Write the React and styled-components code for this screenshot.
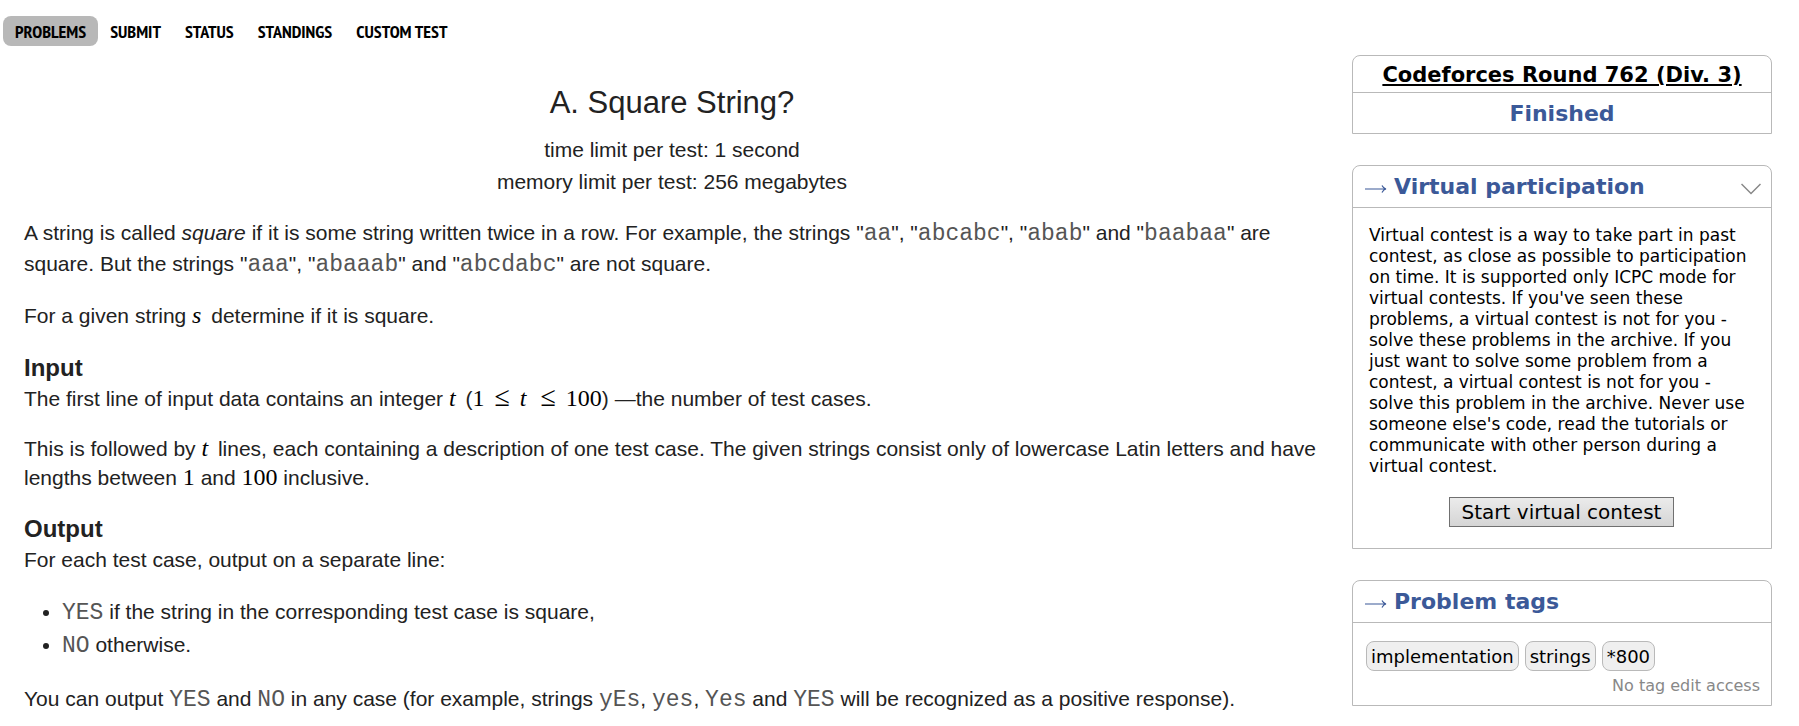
import React from 'react';
import styled, { createGlobalStyle, css } from 'styled-components';

const LINE = '#b9b9b9';
const BLUE = '#3b5998';

const GlobalStyle = createGlobalStyle`
  * { box-sizing: border-box; }
  body {
    margin: 0;
    background: #fff;
    color: #000;
    font-family: Verdana, "DejaVu Sans", sans-serif;
  }
`;

const Nav = styled.nav`
  display: flex;
  padding: 16px 0 0 3px;
`;

const Tab = styled.a`
  padding: 2px 12px 0;
  border-radius: 8px;
  background: ${(p) => (p.$active ? '#b8b8b8' : 'transparent')};
  color: #000;
  font: bold 18px/28px "PT Sans Narrow", "Liberation Sans Narrow", "Roboto Condensed", "Open Sans Condensed", "Liberation Sans", sans-serif;
  text-decoration: none;
  text-transform: uppercase;
`;

const Page = styled.div`
  display: grid;
  grid-template-columns: minmax(0, 1fr) 420px;
  gap: 32px;
  padding: 0 27px 12px 24px;
`;

const Statement = styled.main`
  padding-top: 36px;
  color: #222;
  font: 21px/31px "Liberation Sans", Arial, sans-serif;
`;

const Header = styled.header`
  margin-bottom: 19px;
  text-align: center;
  line-height: 32px;
`;

const Title = styled.h1`
  margin: 0 0 11px;
  font-size: 31px;
  font-weight: normal;
  line-height: 41px;
`;

const Paragraph = styled.p`
  margin: 0 0 21px;
  line-height: ${(p) => (p.$tight ? 29 : 31)}px;
`;

const SectionTitle = styled.h2`
  margin: 0;
  font-size: 24px;
  line-height: 32px;
`;

const List = styled.ul`
  margin: 0 0 22px;
  padding-left: 38px;
  line-height: 33px;
`;

const Tt = styled.code`
  color: #555;
  font: 23px/20px "Liberation Mono", monospace;
`;

const mathFont = css`
  color: #000;
  font: 24px/20px "Liberation Serif", serif;
`;

const Num = styled.span`
  ${mathFont}
`;

const Var = styled.var`
  ${mathFont}
  margin-right: 4px;
  font-style: italic;
`;

const Rel = styled.span`
  ${mathFont}
  margin: 0 10px;
  font-size: 28px;
`;

const Sidebar = styled.aside`
  display: flex;
  flex-direction: column;
  gap: 31px;
  padding-top: 9px;
`;

const Box = styled.section`
  border: 1px solid ${LINE};
  border-radius: 8px 8px 0 0;
`;

const ContestName = styled.h2`
  margin: 0;
  padding-top: 2px;
  border-bottom: 1px solid ${LINE};
  font-size: 21px;
  line-height: 34px;
  text-align: center;
`;

const ContestLink = styled.a`
  color: #000;
`;

const ContestState = styled.div`
  padding-top: 2px;
  color: ${BLUE};
  font-size: 22px;
  font-weight: bold;
  line-height: 38px;
  text-align: center;
`;

const Caption = styled.div`
  display: flex;
  align-items: center;
  gap: 7px;
  padding: 0 10px 0 12px;
  border-bottom: 1px solid ${LINE};
  color: ${BLUE};
`;

const CaptionText = styled.h2`
  flex: 1;
  margin: 0;
  font-size: 22px;
  line-height: 41px;
`;

const Toggle = styled.button`
  display: flex;
  padding: 4px 0 0;
  border: 0;
  background: none;
  color: #888;
`;

const ArrowSvg = styled.svg`
  flex: none;
  margin-top: 4px;
`;

const VirtualBody = styled.div`
  padding: 17px 17px 21px 16px;
  text-align: center;
`;

const VirtualText = styled.p`
  margin: 0 0 20px;
  font-size: 17px;
  line-height: 21px;
  text-align: left;
`;

const StartButton = styled.button`
  height: 30px;
  padding: 0 12px;
  border: 1px solid #707070;
  background: linear-gradient(#ebebeb, #d5d5d5);
  color: #000;
  font: 20px/26px Verdana, "DejaVu Sans", sans-serif;
  vertical-align: top;
`;

const TagsBody = styled.div`
  padding: 18px 11px 9px 13px;
`;

const Tags = styled.div`
  display: flex;
  gap: 6px;
`;

const Tag = styled.span`
  padding: 1px 4px 0;
  border: 1px solid ${LINE};
  border-radius: 8px;
  background: #efefef;
  font-size: 18px;
  line-height: 27px;
`;

const Note = styled.div`
  margin-top: 5px;
  color: #888;
  font-size: 16px;
  line-height: 20px;
  text-align: right;
`;

const Arrow = () => (
  <ArrowSvg width="22" height="10" viewBox="0 0 22 10" fill="none" stroke="currentColor" strokeWidth="1.2" aria-hidden="true">
    <path d="M0 5H21M17 1.5C18 3.500 19 4.500 21 5C19 5.500 18 6.500 17 8.500" />
  </ArrowSvg>
);

const Chevron = () => (
  <svg width="20" height="12" viewBox="0 0 20 12" fill="none" stroke="currentColor" strokeWidth="1.5" aria-hidden="true">
    <path d="M0.500 1L10 10.500L19.500 1" />
  </svg>
);

const TABS = ['Problems', 'Submit', 'Status', 'Standings', 'Custom test'];
const TAGS = ['implementation', 'strings', '*800'];

export default function App() {
  return (
    <>
      <GlobalStyle />
      <Nav>
        {TABS.map((name, i) => (
          <Tab key={name} href="#" $active={i === 0}>{name}</Tab>
        ))}
      </Nav>
      <Page>
        <Statement>
          <Header>
            <Title>A. Square String?</Title>
            <div>time limit per test: 1 second</div>
            <div>memory limit per test: 256 megabytes</div>
          </Header>
          <Paragraph>
            A string is called <em>square</em> if it is some string written twice in a row. For example, the strings
            "<Tt>aa</Tt>", "<Tt>abcabc</Tt>", "<Tt>abab</Tt>" and "<Tt>baabaa</Tt>" are square. But the strings
            "<Tt>aaa</Tt>", "<Tt>abaaab</Tt>" and "<Tt>abcdabc</Tt>" are not square.
          </Paragraph>
          <Paragraph>
            For a given string <Var>s</Var> determine if it is square.
          </Paragraph>
          <SectionTitle>Input</SectionTitle>
          <Paragraph $tight>
            The first line of input data contains an integer <Var>t</Var> (<Num>1</Num><Rel>≤</Rel><Var>t</Var><Rel>≤</Rel><Num>100</Num>) —the number of test cases.
          </Paragraph>
          <Paragraph $tight>
            This is followed by <Var>t</Var> lines, each containing a description of one test case. The given strings
            consist only of lowercase Latin letters and have lengths between <Num>1</Num> and <Num>100</Num> inclusive.
          </Paragraph>
          <SectionTitle>Output</SectionTitle>
          <Paragraph $tight>For each test case, output on a separate line:</Paragraph>
          <List>
            <li><Tt>YES</Tt> if the string in the corresponding test case is square,</li>
            <li><Tt>NO</Tt> otherwise.</li>
          </List>
          <Paragraph>
            You can output <Tt>YES</Tt> and <Tt>NO</Tt> in any case (for example, strings <Tt>yEs</Tt>, <Tt>yes</Tt>,{' '}
            <Tt>Yes</Tt> and <Tt>YES</Tt> will be recognized as a positive response).
          </Paragraph>
        </Statement>
        <Sidebar>
          <Box>
            <ContestName><ContestLink href="#">Codeforces Round 762 (Div. 3)</ContestLink></ContestName>
            <ContestState>Finished</ContestState>
          </Box>
          <Box>
            <Caption>
              <Arrow />
              <CaptionText>Virtual participation</CaptionText>
              <Toggle type="button" aria-label="Toggle virtual participation"><Chevron /></Toggle>
            </Caption>
            <VirtualBody>
              <VirtualText>
                Virtual contest is a way to take part in past contest, as close as possible to participation on time.
                It is supported only ICPC mode for virtual contests. If you've seen these problems, a virtual contest
                is not for you - solve these problems in the archive. If you just want to solve some problem from a
                contest, a virtual contest is not for you - solve this problem in the archive. Never use someone
                else's code, read the tutorials or communicate with other person during a virtual contest.
              </VirtualText>
              <StartButton type="button">Start virtual contest</StartButton>
            </VirtualBody>
          </Box>
          <Box>
            <Caption>
              <Arrow />
              <CaptionText>Problem tags</CaptionText>
            </Caption>
            <TagsBody>
              <Tags>
                {TAGS.map((tag) => <Tag key={tag}>{tag}</Tag>)}
              </Tags>
              <Note>No tag edit access</Note>
            </TagsBody>
          </Box>
        </Sidebar>
      </Page>
    </>
  );
}
